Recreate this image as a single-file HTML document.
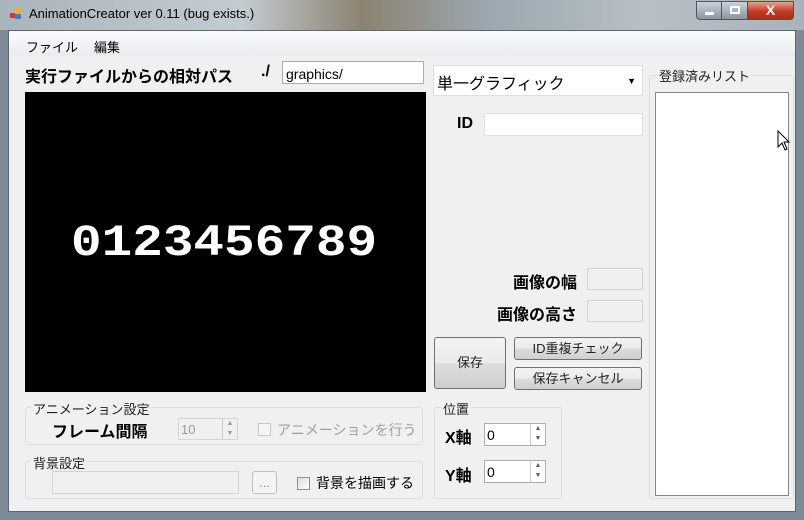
<!DOCTYPE html><html><head><meta charset="utf-8"><style>
*{margin:0;padding:0;box-sizing:border-box}
body{width:804px;height:520px;overflow:hidden;background:#7d8b98;font-family:"Liberation Sans","Noto Sans CJK JP",sans-serif;font-size:13px;color:#000;position:relative}
.a{position:absolute}
.tb{left:0;top:0;width:804px;height:30px;background:linear-gradient(90deg,#a9b4bd 0%,#c3ccd2 30%,#8c8270 45%,#9ba6ae 60%,#b7c0c7 80%,#a9b3bb 100%)}
.client{left:8px;top:30px;width:788px;height:482px;background:#f0f0f0;border:1px solid #5c6670}
.box{background:#fff;border:1px solid #abadb3}
.dis{background:#f0f0f0;border:1px solid #d5d5d5}
.grp{border:1px solid #dcdcdc;border-radius:3px}
.lg{background:#f0f0f0;padding:0 2px;font-size:13px;color:#222}
.btn{border:1px solid #707070;border-radius:3px;background:linear-gradient(#f2f2f2 0%,#ebebeb 50%,#dddddd 51%,#cfcfcf 100%);text-align:center;font-size:13px;color:#222}
.b{font-weight:bold;font-size:16px}
.spin{width:15px;border-left:1px solid #ccc}
</style></head><body>
<div class="a tb"></div>
<div class="a" style="left:10px;top:8px;width:12px;height:12px"><div class="a" style="left:0;top:5px;width:5px;height:5px;background:#d33"></div><div class="a" style="left:5px;top:0;width:6px;height:6px;background:#e9b42a"></div><div class="a" style="left:5px;top:6px;width:6px;height:5px;background:#3a7bd5"></div></div>
<div class="a" style="left:29px;top:6px;font-size:13px;color:#000">AnimationCreator ver 0.11 (bug exists.)</div>
<div class="a" style="left:696px;top:1px;width:26px;height:19px;border:1px solid #555;border-radius:0 0 0 4px;background:linear-gradient(#c9d2da,#8796a4)"><div class="a" style="left:8px;top:10px;width:9px;height:3px;background:#fff"></div></div>
<div class="a" style="left:721px;top:1px;width:27px;height:19px;border:1px solid #555;background:linear-gradient(#c9d2da,#8796a4)"><div class="a" style="left:8px;top:4px;width:10px;height:8px;border:2px solid #fff"></div></div>
<div class="a" style="left:747px;top:1px;width:47px;height:19px;border:1px solid #552;border-radius:0 0 4px 0;background:linear-gradient(#e8a090,#c43a25 55%,#b02a18);color:#fff;font-weight:bold;text-align:center;font-size:14px;line-height:17px">X</div>
<div class="a client">
<div class="a" style="left:0;top:0;width:786px;height:25px;background:linear-gradient(#fafbfd,#e9ecf0)"></div>
<div class="a" style="left:17px;top:6px">ファイル</div><div class="a" style="left:85px;top:6px">編集</div>
<div class="a b" style="left:16px;top:32px">実行ファイルからの相対パス</div>
<div class="a b" style="left:252px;top:32px">./</div>
<div class="a box" style="left:273px;top:30px;width:142px;height:23px;padding:4px 3px;font-size:14px">graphics/</div>
<div class="a" style="left:16px;top:61px;width:401px;height:300px;background:#000"></div>
<div class="a" style="left:62px;top:189px;font-family:'Liberation Mono',monospace;font-weight:bold;font-size:51px;color:#fff;transform:scaleY(0.87);transform-origin:0 0;line-height:56px">0123456789</div>
<div class="a box" style="left:424px;top:34px;width:210px;height:31px;border-color:#e0e0e0;padding:4px 3px;font-size:16px">単一グラフィック<span class="a" style="right:6px;top:10px;font-size:9px">▼</span></div>
<div class="a b" style="left:448px;top:84px">ID</div>
<div class="a box" style="left:475px;top:82px;width:159px;height:23px;border-color:#e0e0e0"></div>
<div class="a b" style="left:504px;top:238px">画像の幅</div>
<div class="a dis" style="left:578px;top:237px;width:56px;height:22px"></div>
<div class="a b" style="left:488px;top:270px">画像の高さ</div>
<div class="a dis" style="left:578px;top:269px;width:56px;height:22px"></div>
<div class="a btn" style="left:425px;top:306px;width:72px;height:52px;line-height:50px">保存</div>
<div class="a btn" style="left:505px;top:306px;width:128px;height:23px;line-height:21px">ID重複チェック</div>
<div class="a btn" style="left:505px;top:336px;width:128px;height:23px;line-height:21px">保存キャンセル</div>
<div class="a grp" style="left:640px;top:44px;width:145px;height:424px"></div>
<div class="a lg" style="left:648px;top:35px">登録済みリスト</div>
<div class="a box" style="left:646px;top:61px;width:134px;height:404px;border-color:#828790"></div>
<svg class="a" style="left:768px;top:99px" width="14" height="22"><path d="M1 1 L1 17 L5 13 L8 20 L10 19 L7 12 L12 12 Z" fill="#fff" stroke="#000"/></svg>
<div class="a grp" style="left:16px;top:376px;width:398px;height:38px"></div>
<div class="a lg" style="left:22px;top:368px">アニメーション設定</div>
<div class="a b" style="left:43px;top:387px">フレーム間隔</div>
<div class="a dis" style="left:169px;top:387px;width:60px;height:22px;padding:3px 2px;color:#999">10<div class="a spin" style="right:0;top:0;height:20px;font-size:7px;line-height:10px;text-align:center">▲<br>▼</div></div>
<div class="a" style="left:249px;top:392px;width:13px;height:13px;border:1px solid #c8c8c8;background:#f5f5f5"></div>
<div class="a" style="left:268px;top:389px;color:#a0a0a0;font-size:14px">アニメーションを行う</div>
<div class="a grp" style="left:16px;top:430px;width:398px;height:38px"></div>
<div class="a lg" style="left:22px;top:422px">背景設定</div>
<div class="a dis" style="left:43px;top:440px;width:187px;height:23px"></div>
<div class="a" style="left:243px;top:440px;width:25px;height:23px;border:1px solid #c0c0c0;border-radius:3px;background:#f4f4f4;text-align:center;color:#888;line-height:22px">...</div>
<div class="a" style="left:288px;top:446px;width:13px;height:13px;border:1px solid #8f8f8f;background:linear-gradient(135deg,#ddd,#fff)"></div>
<div class="a" style="left:307px;top:442px;font-size:14px">背景を描画する</div>
<div class="a grp" style="left:425px;top:376px;width:128px;height:92px"></div>
<div class="a lg" style="left:432px;top:368px">位置</div>
<div class="a b" style="left:436px;top:393px">X軸</div>
<div class="a box" style="left:475px;top:392px;width:62px;height:23px;padding:3px 2px;font-size:14px">0<div class="a spin" style="right:0;top:0;height:21px;font-size:7px;line-height:10px;text-align:center;color:#567">▲<br>▼</div></div>
<div class="a b" style="left:436px;top:431px">Y軸</div>
<div class="a box" style="left:475px;top:429px;width:62px;height:23px;padding:3px 2px;font-size:14px">0<div class="a spin" style="right:0;top:0;height:21px;font-size:7px;line-height:10px;text-align:center;color:#567">▲<br>▼</div></div>
</div>
</body></html>
